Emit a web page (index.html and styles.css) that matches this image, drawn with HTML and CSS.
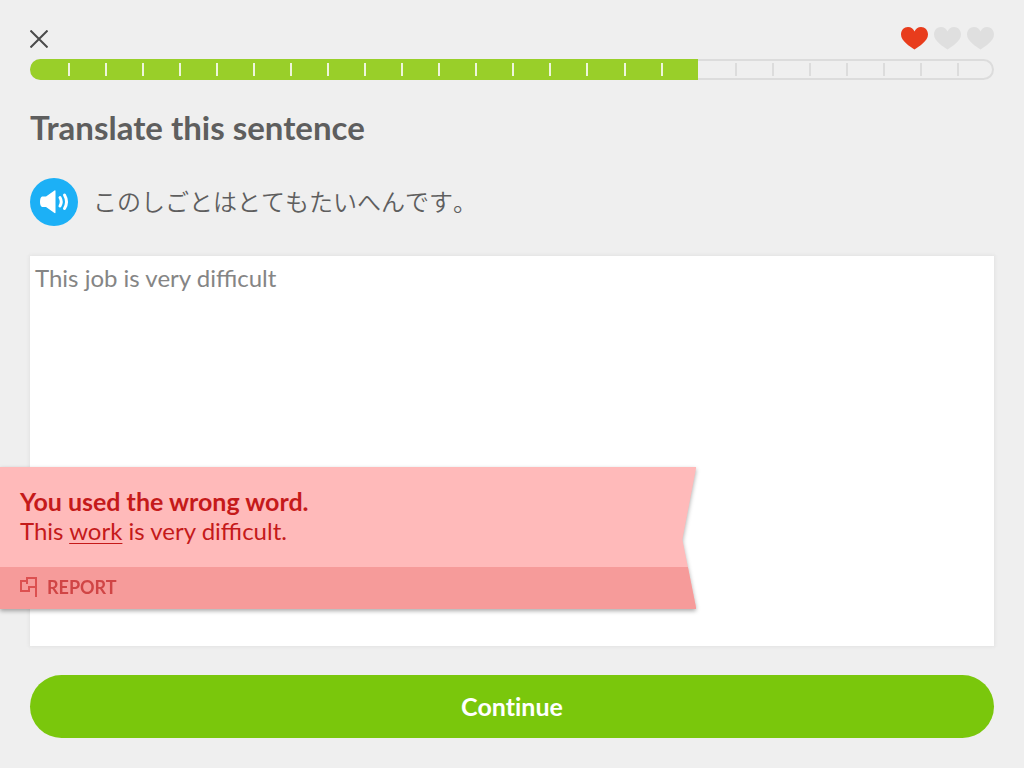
FILE: index.html
```html
<!DOCTYPE html>
<html lang="en">
<head>
    <meta charset="UTF-8">
    <meta name="viewport" content="width=device-width, initial-scale=1.0">
    <title>Translate this sentence</title>
    <link rel="stylesheet" href="styles.css">
</head>
<body>

    <header class="top">
        <button class="close" type="button" aria-label="Close">
            <svg width="18" height="18" viewBox="0 0 18 18"><path d="M0.5 0.5 17.5 17.5M17.5 0.5 0.5 17.5"/></svg>
        </button>
        <div class="hearts" role="img" aria-label="1 of 3 hearts left">
            <svg class="heart full" viewBox="0 0 27 24"><path d="M13.500 22.500C9 19.500 0 14 0 7.500 0 3 3 0 7 0c3 0 5.500 2 6.500 4.500C14.500 2 17 0 20 0c4 0 7 3 7 7.500C27 14 18 19.500 13.500 22.500z"/></svg>
            <svg class="heart" viewBox="0 0 27 24"><path d="M13.500 22.500C9 19.500 0 14 0 7.500 0 3 3 0 7 0c3 0 5.500 2 6.500 4.500C14.500 2 17 0 20 0c4 0 7 3 7 7.500C27 14 18 19.500 13.500 22.500z"/></svg>
            <svg class="heart" viewBox="0 0 27 24"><path d="M13.500 22.500C9 19.500 0 14 0 7.500 0 3 3 0 7 0c3 0 5.500 2 6.500 4.500C14.500 2 17 0 20 0c4 0 7 3 7 7.500C27 14 18 19.500 13.500 22.500z"/></svg>
        </div>
    </header>

    <div class="progress" role="progressbar" aria-label="Lesson progress" aria-valuemin="0" aria-valuemax="26" aria-valuenow="18">
        <span class="done"></span><span class="done"></span><span class="done"></span><span class="done"></span><span class="done"></span><span class="done"></span>
        <span class="done"></span><span class="done"></span><span class="done"></span><span class="done"></span><span class="done"></span><span class="done"></span>
        <span class="done"></span><span class="done"></span><span class="done"></span><span class="done"></span><span class="done"></span><span class="done last"></span>
        <span></span><span></span><span></span><span></span><span></span><span></span><span></span><span></span>
    </div>

    <main class="lesson">
        <h1><label for="answer">Translate this sentence</label></h1>
        <div class="sentence">
            <button class="listen" type="button" aria-label="Listen">
                <svg width="48" height="48" viewBox="0 0 48 48">
                    <path class="speaker" d="M12 18.500h4L24.500 12.500q1-.5 1 .5v21.500q0 1-1 .5L16 29h-4q-2-1-2-5.200t2-5.300z"/>
                    <path class="wave" d="M30 19.500q2.500 4.300 0 8.500M34.500 17q4 6.800 0 13.500"/>
                </svg>
            </button>
            <p lang="ja">このしごとはとてもたいへんです。</p>
        </div>
        <textarea id="answer" class="answer" spellcheck="false">This job is very difficult</textarea>
    </main>

    <button class="continue" type="button">Continue</button>

    <div class="feedback" role="alert">
        <div class="ribbon">
            <div class="message">
                <strong>You used the wrong word.</strong>
                <p>This <u>work</u> is very difficult.</p>
            </div>
            <div class="actions">
                <button class="report" type="button">
                    <svg width="17" height="20" viewBox="0 0 17 20"><path d="M16 20V1H7v3H1v10h8v-4h7M7 4v3"/></svg>
                    REPORT
                </button>
            </div>
        </div>
    </div>

</body>
</html>
```

FILE: styles.css
```css
*, *::before, *::after {
  box-sizing: border-box;
}

body {
  position: relative;
  display: flex;
  flex-direction: column;
  min-height: 100vh;
  margin: 0;
  padding: 26px 30px 30px;
  color: #5e5e5e;
  background-color: #efefef;
  font: 24px/30px Lato, "Noto Sans CJK JP", sans-serif;
}

h1, p {
  margin: 0;
}

button {
  padding: 0;
  border: none;
  color: inherit;
  background: none;
  font: inherit;
  cursor: pointer;
}

svg {
  display: block;
}

.top {
  display: flex;
  justify-content: space-between;
  align-items: center;
  height: 26px;
}

.close path {
  fill: none;
  stroke: #4a4a4a;
  stroke-width: 2;
}

.hearts {
  display: flex;
  gap: 6px;
}

.heart {
  width: 27px;
  height: 24px;
  fill: #dfdfdf;
}

.heart.full {
  fill: #e83c1c;
}

/* progress bar, one cell per step */
.progress {
  display: flex;
  height: 21px;
  margin-top: 7px;
  border-radius: 11px;
  overflow: hidden;
  box-shadow: inset 0 0 0 2px #dcdcdc;
}

.progress span {
  display: flex;
  flex: 1;
  justify-content: flex-end;
  align-items: center;
}

.progress span:first-child {
  padding-left: 1px;
}

.progress span::after {
  content: "";
  width: 2px;
  height: 13px;
  margin-right: -2px;
  background-color: #dcdcdc;
  z-index: 1;
}

.progress .done {
  background-color: #99cf29;
}

.progress .done::after {
  background-color: #eef5dc;
}

.progress .last::after,
.progress span:last-child::after {
  display: none;
}

.lesson {
  display: flex;
  flex: 1;
  flex-direction: column;
}

h1 {
  margin-top: 27px;
  font-size: 33px;
  line-height: 40px;
}

.sentence {
  display: flex;
  align-items: center;
  gap: 15px;
  margin-top: 31px;
}

.sentence p {
  font-weight: 350;
  font-kerning: none;
}

.listen {
  border-radius: 50%;
  background-color: #1cb0f6;
}

.speaker {
  fill: #fff;
}

.wave {
  fill: none;
  stroke: #fff;
  stroke-width: 3;
  stroke-linecap: round;
}

.answer {
  flex: 1;
  width: 100%;
  min-height: 200px;
  margin-top: 30px;
  padding: 7px 5px;
  border: none;
  outline: none;
  color: #858585;
  background-color: #fff;
  box-shadow: 0 0 3px 1px #e2e2e2;
  font: inherit;
  resize: none;
}

.continue {
  height: 63px;
  margin-top: 29px;
  padding-bottom: 2px;
  border-radius: 32px;
  color: #fff;
  background-color: #7ac70c;
  font-size: 25px;
  font-weight: 700;
  font-variant-ligatures: none;
}

/* feedback lies over the answer box */
.feedback {
  position: absolute;
  left: 0;
  bottom: 159px;
  width: 68%;
  color: #c51a1a;
  filter: drop-shadow(0 2px 2px #0005);
}

.ribbon {
  background-color: #ffbaba;
  clip-path: polygon(0 0, 100% 0, 98% 51%, 100% 100%, 0 100%);
}

.message {
  padding: 19px 20px 21px;
}

.message strong {
  display: block;
  font-size: 25px;
}

.message u {
  text-decoration-thickness: 1px;
  text-underline-offset: 3px;
}

.actions {
  padding: 5px 20px 7px;
  background-color: #f69b9a;
}

.report {
  display: flex;
  align-items: center;
  gap: 10px;
  color: #d04545;
  font-size: 18px;
  line-height: 30px;
  font-weight: 700;
}

.report path {
  fill: none;
  stroke: #dc5050;
  stroke-width: 2;
}
```
